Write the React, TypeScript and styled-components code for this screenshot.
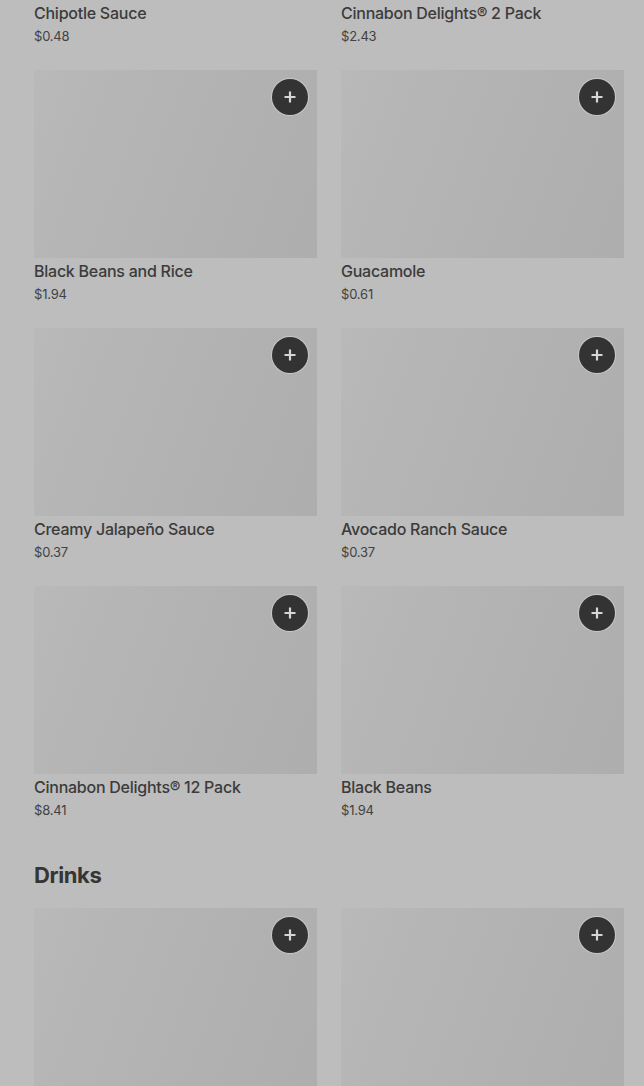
import React from "react";
import styled, { createGlobalStyle } from "styled-components";

const Global = createGlobalStyle`
  html, body { margin: 0; padding: 0; background: #bdbdbd; }
  body { font-family: Inter, "Open Sans", Arial, sans-serif; overflow: hidden; }
  * { box-sizing: border-box; }
`;

const Viewport = styled.div`
  height: 1086px;
  overflow: hidden;
  background: #bdbdbd;
`;

const Content = styled.div`
  margin-top: -188px;
  padding: 0 20px 0 34px;
`;

const Section = styled.section`
  display: flex;
  flex-direction: column;
`;

const Heading = styled.h2`
  margin: 39px 0 17px;
  font-size: 22px;
  line-height: 32px;
  font-weight: 700;
  color: #353535;
  letter-spacing: -0.4px;
`;

const Grid = styled.div`
  display: grid;
  grid-template-columns: 283px 283px;
  column-gap: 24px;
  row-gap: 24px;
`;

const Card = styled.div`
  display: flex;
  flex-direction: column;
`;

const Thumb = styled.div`
  position: relative;
  height: 188px;
  background: linear-gradient(110deg, #b9b9b9 0%, #b4b4b4 35%, #b1b1b1 65%, #aeaeae 100%);
`;

const AddButton = styled.button`
  position: absolute;
  top: 9px;
  right: 9px;
  width: 36px;
  height: 36px;
  border-radius: 50%;
  border: none;
  padding: 0;
  background: #333333;
  box-shadow: 0 0 0 1px rgba(220, 220, 220, 0.55);
  display: flex;
  align-items: center;
  justify-content: center;
`;

const Title = styled.div`
  margin-top: 3px;
  font-size: 16px;
  line-height: 20px;
  font-weight: 500;
  color: #3b3b3b;
  letter-spacing: -0.25px;
  white-space: nowrap;
`;

const Price = styled.div`
  margin-top: 3px;
  font-size: 13px;
  line-height: 20px;
  font-weight: 400;
  color: #424242;
  letter-spacing: -0.2px;
`;

const Plus = () => (
  <svg width="14" height="14" viewBox="0 0 14 14">
    <path d="M7 1.5v11M1.5 7h11" stroke="#d6d6d6" strokeWidth="2.2" />
  </svg>
);

type Item = { name: string; price: string };

const sauces: Item[] = [
  { name: "Chipotle Sauce", price: "$0.48" },
  { name: "Cinnabon Delights® 2 Pack", price: "$2.43" },
  { name: "Black Beans and Rice", price: "$1.94" },
  { name: "Guacamole", price: "$0.61" },
  { name: "Creamy Jalapeño Sauce", price: "$0.37" },
  { name: "Avocado Ranch Sauce", price: "$0.37" },
  { name: "Cinnabon Delights® 12 Pack", price: "$8.41" },
  { name: "Black Beans", price: "$1.94" },
];

const ItemCard = ({ item }: { item?: Item }) => (
  <Card>
    <Thumb>
      <AddButton aria-label="Add">
        <Plus />
      </AddButton>
    </Thumb>
    {item && (
      <>
        <Title>{item.name}</Title>
        <Price>{item.price}</Price>
      </>
    )}
  </Card>
);

export default function App() {
  return (
    <Viewport>
      <Global />
      <Content>
        <Section>
          <Grid>
            {sauces.map((it) => (
              <ItemCard key={it.name} item={it} />
            ))}
          </Grid>
        </Section>
        <Section>
          <Heading>Drinks</Heading>
          <Grid>
            <ItemCard />
            <ItemCard />
          </Grid>
        </Section>
      </Content>
    </Viewport>
  );
}
